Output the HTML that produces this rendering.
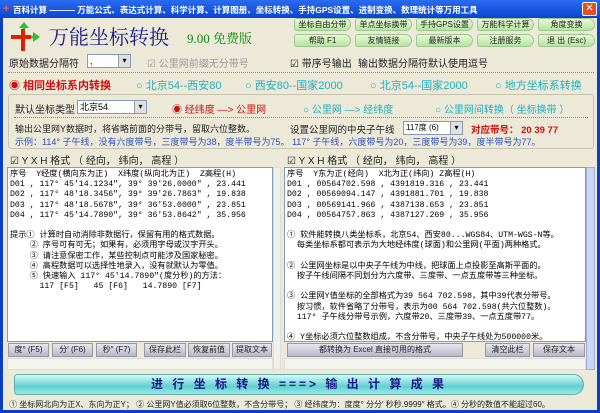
<!DOCTYPE html>
<html><head><meta charset="utf-8"><style>
*{margin:0;padding:0;box-sizing:border-box}
body{width:600px;height:413px;overflow:hidden;background:#0a3fc4;font-family:"Liberation Sans","Noto Sans CJK SC",sans-serif;font-size:9px;position:relative}
.a{position:absolute;white-space:nowrap}
#win{position:absolute;left:3px;top:18px;width:594px;height:392px;background:#ece9d8}
.btn{position:absolute;height:13px;border-radius:3px 7px 7px 3px;background:linear-gradient(#e8f8d8,#b8e4a0);border:1px solid #9cc890;font-size:8px;text-align:center;line-height:11px;color:#222}
.gb{position:absolute;height:14px;background:linear-gradient(#e8e6f0,#b8b6cc);border:1px solid #999;font-size:8px;text-align:center;line-height:12px;color:#222}
.combo{position:absolute;background:#fff;border:1px solid #7f9db9;height:14px;font-size:9px;line-height:12px;padding-left:2px}
.combo:after{content:"▾";position:absolute;right:0;top:0;width:11px;height:12px;background:#e0e0e0;border-left:1px solid #999;font-size:8px;text-align:center}
.ta{position:absolute;background:#fff;border:1px solid #7f9db9;font-family:"Liberation Mono","Noto Sans CJK SC",monospace;font-size:8.2px;line-height:10.2px;padding:2px;color:#000;white-space:pre;overflow:hidden}
.dot{position:absolute;border-top:1px dotted #888;height:0}
</style></head><body>
<div class="a" style="left:0;top:0;width:600px;height:18px;background:linear-gradient(#2a6cf0,#0a44d0)"></div>
<div class="a" style="left:3px;top:3px;color:#f55;font-size:11px;font-weight:bold">+</div>
<div class="a" style="left:13px;top:4px;color:#fff;font-size:8.5px;font-weight:bold">百科计算 ——— 万能公式、表达式计算、科学计算、计算图册、坐标转换、手持GPS设置、进制变换、数理统计等万用工具</div>
<div class="a" style="left:582px;top:2px;width:15px;height:14px;background:#e05020;border:1px solid #fff;border-radius:2px;color:#fff;font-size:10px;text-align:center;line-height:12px">✕</div>
<div id="win"></div>
<svg class="a" style="left:9px;top:21px" width="32" height="30" viewBox="0 0 32 30"><path d="M14 8v22" stroke="#e02000" stroke-width="4"/><path d="M2 16h20" stroke="#e02000" stroke-width="4"/><path d="M15 8V3" stroke="#30c030" stroke-width="2.5"/><path d="M10 7l5-6 5 6" fill="#30c030"/><path d="M22 16h4" stroke="#30c030" stroke-width="2.5"/><path d="M24 11l7 5-7 5z" fill="#30c030"/></svg>
<div class="a" style="left:49px;top:21px;color:#1a1a8a;font-size:20px;font-family:'Noto Serif CJK SC',serif">万能坐标转换</div>
<div class="a" style="left:187px;top:28px;color:#118811;font-size:13px;font-family:'Liberation Serif','Noto Serif CJK SC',serif">9.00 免费版</div>
<div class="btn" style="left:294px;top:18px;width:57px">坐标自由分带</div>
<div class="btn" style="left:355px;top:18px;width:57px">单点坐标换带</div>
<div class="btn" style="left:416px;top:18px;width:57px">手持GPS设置</div>
<div class="btn" style="left:477px;top:18px;width:57px">万能科学计算</div>
<div class="btn" style="left:538px;top:18px;width:57px">角度变换</div>
<div class="btn" style="left:294px;top:34px;width:57px">帮助 F1</div>
<div class="btn" style="left:355px;top:34px;width:57px">友情链接</div>
<div class="btn" style="left:416px;top:34px;width:57px">最新版本</div>
<div class="btn" style="left:477px;top:34px;width:57px">注册服务</div>
<div class="btn" style="left:538px;top:34px;width:57px">退 出 (Esc)</div>
<div class="a" style="left:9px;top:55px;font-size:10px;color:#222">原始数据分隔符</div>
<div class="combo" style="left:87px;top:54px;width:44px">,</div>
<div class="a" style="left:147px;top:55px;font-size:10px;color:#999">☑ 公里网前缀无分带号</div>
<div class="a" style="left:290px;top:55px;font-size:10px;color:#222">☑ 带序号输出</div>
<div class="a" style="left:358px;top:55px;font-size:10px;color:#222">输出数据分隔符默认使用逗号</div>
<div class="dot" style="left:8px;top:72px;width:586px"></div>
<div class="a" style="left:9px;top:77px;font-size:11px;color:#d01010;font-weight:bold">◉ 相同坐标系内转换</div>
<div class="a" style="left:136px;top:77px;font-size:11px;color:#20b0c0">○ 北京54--西安80</div>
<div class="a" style="left:245px;top:77px;font-size:11px;color:#20b0c0">○ 西安80--国家2000</div>
<div class="a" style="left:370px;top:77px;font-size:11px;color:#20b0c0">○ 北京54--国家2000</div>
<div class="a" style="left:495px;top:77px;font-size:11px;color:#20b0c0">○ 地方坐标系转换</div>
<div class="a" style="left:8px;top:94px;width:586px;height:55px;border:1px solid #c8c4b0;border-radius:3px"></div>
<div class="a" style="left:15px;top:101px;font-size:10px;color:#222">默认坐标类型</div>
<div class="combo" style="left:77px;top:100px;width:70px">北京54</div>
<div class="a" style="left:172px;top:101px;font-size:10px;color:#d01010">◉ 经纬度 —&gt; 公里网</div>
<div class="a" style="left:303px;top:101px;font-size:10px;color:#20b0c0">○ 公里网 —&gt; 经纬度</div>
<div class="a" style="left:435px;top:101px;font-size:10px;color:#20b0c0">○ 公里网间转换（ 坐标换带 ）</div>
<div class="dot" style="left:14px;top:117px;width:574px"></div>
<div class="a" style="left:15px;top:122px;font-size:9px;color:#222">输出公里网Y数据时，将省略前面的分带号，留取六位整数。</div>
<div class="a" style="left:290px;top:122px;font-size:9.5px;color:#222">设置公里网的中央子午线</div>
<div class="combo" style="left:403px;top:121px;width:60px;font-size:8px">117度 (6)</div>
<div class="a" style="left:471px;top:122px;font-size:9.5px;color:#d01010;font-weight:bold">对应带号： 20  39  77</div>
<div class="a" style="left:15px;top:135px;color:#3050c0;font-size:9px">示例：114° 子午线，没有六度带号，三度带号为38，度半带号为75。 117° 子午线，六度带号为20，三度带号为39，度半带号为77。</div>
<div class="a" style="left:10px;top:152px;font-size:10px;color:#222">☑  Y X H 格式 （ 经向， 纬向， 高程 ）</div>
<div class="a" style="left:287px;top:152px;font-size:10px;color:#222">☑  Y X H 格式 （ 经向， 纬向， 高程 ）</div>
<div class="ta" style="left:7px;top:167px;width:266px;height:175px">序号  Y经度(横向东为正)  X纬度(纵向北为正)  Z高程(H)
D01 , 117° 45′14.1234″, 39° 39′26.0000″ , 23.441
D02 , 117° 48′18.3456″, 39° 39′26.7863″ , 19.838
D03 , 117° 48′18.5678″, 39° 36′53.0000″ , 23.851
D04 , 117° 45′14.7890″, 39° 36′53.8642″ , 35.956

提示① 计算时自动消除非数据行，保留有用的格式数据。
    ② 序号可有可无；如果有，必须用字母或汉字开头。
    ③ 请注意保密工作，某些控制点可能涉及国家秘密。
    ④ 高程数据可以选择性地录入，没有就默认为零值。
    ⑤ 快速输入 117° 45′14.7890″(度分秒)的方法：
      117 [F5]   45 [F6]   14.7890 [F7]</div>
<div class="a" style="left:273px;top:167px;width:8px;height:203px;background:#f0f0ea;border:1px solid #ddd"></div>
<div class="ta" style="left:284px;top:167px;width:302px;height:175px">序号  Y东为正(经向)  X北为正(纬向) Z高程(H)
D01 , 00564702.598 , 4391819.316 , 23.441
D02 , 00569094.147 , 4391881.701 , 19.838
D03 , 00569141.966 , 4387138.653 , 23.851
D04 , 00564757.863 , 4387127.269 , 35.956

① 软件能转换八类坐标系，北京54、西安80...WGS84、UTM-WGS-N等。
  每类坐标系都可表示为大地经纬度(球面)和公里网(平面)两种格式。

② 公里网坐标是以中央子午线为中线，把球面上点投影至高斯平面的。
  按子午线间隔不同划分为六度带、三度带、一点五度带等三种坐标。

③ 公里网Y值坐标的全部格式为39 564 702.598，其中39代表分带号。
  按习惯，软件省略了分带号，表示为00 564 702.598(共六位整数)。
  117° 子午线分带号示例，六度带20、三度带39、一点五度带77。

④ Y坐标必须六位整数组成，不含分带号，中央子午线处为500000米。
  X坐标一般由一至七位整数组成，代表了该点到赤道的距离(米数)。</div>
<div class="a" style="left:586px;top:167px;width:9px;height:203px;background:#c8d8f8;border:1px solid #aac"></div>
<div class="gb" style="left:8px;top:343px;width:41px">度° (F5)</div>
<div class="gb" style="left:52px;top:343px;width:41px">分′ (F6)</div>
<div class="gb" style="left:96px;top:343px;width:41px">秒″ (F7)</div>
<div class="gb" style="left:144px;top:343px;width:42px">保存此栏</div>
<div class="gb" style="left:188px;top:343px;width:42px">恢复前值</div>
<div class="gb" style="left:232px;top:343px;width:40px">提取文本</div>
<div class="gb" style="left:287px;top:343px;width:176px">都转换为 Excel 直接可用的格式</div>
<div class="gb" style="left:485px;top:343px;width:45px">清空此栏</div>
<div class="gb" style="left:533px;top:343px;width:52px">保存文本</div>
<div class="a" style="left:7px;top:358px;width:266px;height:12px;background:#f4f4ee;border:1px solid #ddd"></div>
<div class="a" style="left:284px;top:358px;width:302px;height:12px;background:#f4f4ee;border:1px solid #ddd"></div>
<div class="a" style="left:14px;top:374px;width:570px;height:21px;border-radius:4px 12px 12px 4px;background:linear-gradient(#d8f8f8,#60d0d0 60%,#9ee8e8);border:1px solid #60b0b0;text-align:center;font-size:12px;font-weight:bold;color:#1a1a8a;line-height:19px;letter-spacing:3px">进 行 坐 标 转 换 ===&gt; 输 出 计 算 成 果</div>
<div class="a" style="left:9px;top:399px;font-size:8px;color:#222">① 坐标网北向为正X、东向为正Y； ② 公里网Y值必须取6位整数，不含分带号； ③ 经纬度为：度度° 分分′ 秒秒.9999″ 格式。④ 分秒的数值不能超过60。</div>
</body></html>
